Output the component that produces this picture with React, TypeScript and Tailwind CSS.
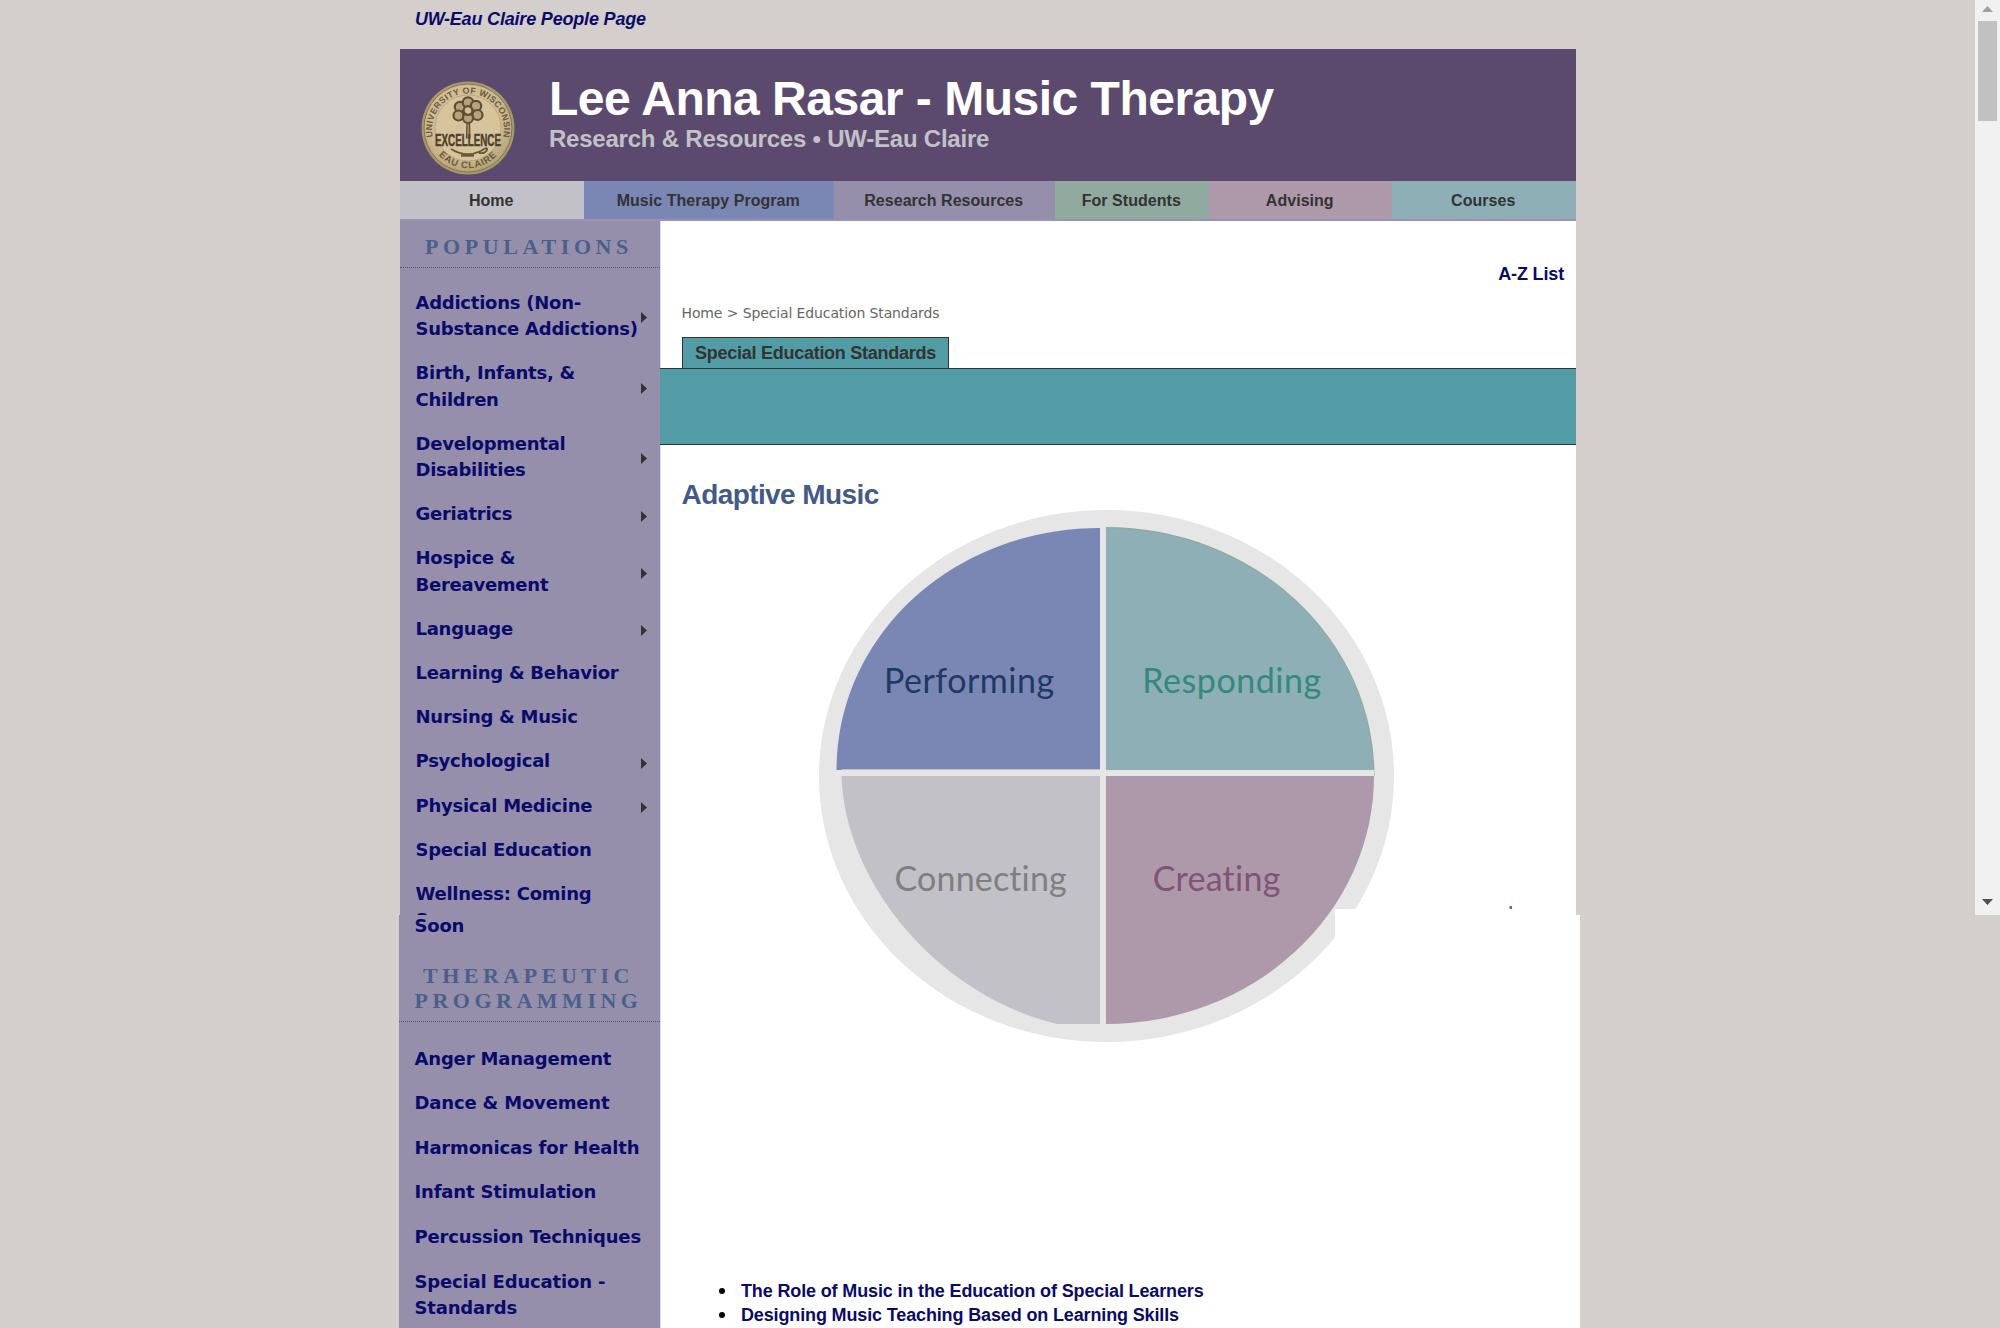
type Item = { lines: string[]; arrow?: boolean };

const populations: Item[] = [
  { lines: ["Addictions (Non-", "Substance Addictions)"], arrow: true },
  { lines: ["Birth, Infants, &", "Children"], arrow: true },
  { lines: ["Developmental", "Disabilities"], arrow: true },
  { lines: ["Geriatrics"], arrow: true },
  { lines: ["Hospice &", "Bereavement"], arrow: true },
  { lines: ["Language"], arrow: true },
  { lines: ["Learning & Behavior"] },
  { lines: ["Nursing & Music"] },
  { lines: ["Psychological"], arrow: true },
  { lines: ["Physical Medicine"], arrow: true },
  { lines: ["Special Education"] },
  { lines: ["Wellness: Coming", "Soon"] },
];

const programming: Item[] = [
  { lines: ["Anger Management"] },
  { lines: ["Dance & Movement"] },
  { lines: ["Harmonicas for Health"] },
  { lines: ["Infant Stimulation"] },
  { lines: ["Percussion Techniques"] },
  { lines: ["Special Education -", "Standards"] },
];

const tabs = [
  { label: "Home", cls: "w-[184px] bg-[#c2c1c8]" },
  { label: "Music Therapy Program", cls: "w-[250px] bg-[#7a87b4]" },
  { label: "Research Resources", cls: "w-[221px] bg-[#958fab]" },
  { label: "For Students", cls: "w-[154px] bg-[#90aa9f]" },
  { label: "Advising", cls: "w-[183px] bg-[#ae99aa]" },
  { label: "Courses", cls: "flex-1 bg-[#8eafb6]" },
];

function NavItem({ item }: { item: Item }) {
  return (
    <li className="flex items-center justify-between pl-[15.5px] pr-[13px]">
      <span>
        {item.lines.map((line) => (
          <span key={line} className="block">
            {line}
          </span>
        ))}
      </span>
      {item.arrow && (
        <svg className="mt-[3px] h-[11px] w-[6px] shrink-0" viewBox="0 0 6 11">
          <path d="M0 0 L6 5.5 L0 11 Z" fill="#333333" />
        </svg>
      )}
    </li>
  );
}

function Seal() {
  return (
    <svg className="h-[94px] w-[94px]" viewBox="-47 -47 94 94">
      <defs>
        <radialGradient id="gold" cx="45%" cy="40%" r="60%">
          <stop offset="0" stopColor="#dcc9a3" />
          <stop offset="0.7" stopColor="#cfba92" />
          <stop offset="1" stopColor="#b8a47a" />
        </radialGradient>
        <path id="topArc" d="M-35.2 9 A36 36 0 1 1 35.2 9" />
        <path id="bottomArc" d="M-30 26.6 A40 40 0 0 0 30 26.6" />
      </defs>
      <circle r="46.5" fill="#a69a6c" />
      <circle r="44" fill="url(#gold)" stroke="#857548" strokeWidth="1" />
      <circle r="33" fill="#d8c49c" stroke="#b5a178" strokeWidth="0.8" />
      <g fill="#6b5a3c" fontFamily="'Liberation Sans', sans-serif" fontWeight="bold" fontSize="8.8">
        <text textLength="128" lengthAdjust="spacing">
          <textPath href="#topArc">UNIVERSITY OF WISCONSIN</textPath>
        </text>
        <text fontSize="9.5" letterSpacing="0.8">
          <textPath href="#bottomArc" startOffset="50%" textAnchor="middle">
            EAU CLAIRE
          </textPath>
        </text>
      </g>
      <g fill="#b9a278" stroke="#5f4e36" strokeWidth="2.2">
        <path d="M-1.5 10 L-1 -6 L1.5 -6 L2 10 Z" fill="#a08a62" strokeWidth="1.2" />
        <circle cx="-8" cy="-21" r="5.2" />
        <circle cx="0" cy="-25.5" r="5.2" />
        <circle cx="8" cy="-22" r="5.2" />
        <circle cx="-9.5" cy="-12.5" r="5" />
        <circle cx="9.5" cy="-13" r="5" />
        <circle cx="0" cy="-10" r="5" />
        <circle cx="0" cy="-17.5" r="4.4" fill="#d3bf96" />
      </g>
      <text
        x="0"
        y="17.5"
        textAnchor="middle"
        textLength="66"
        lengthAdjust="spacingAndGlyphs"
        fill="#4e3f2b"
        stroke="#4e3f2b"
        strokeWidth="0.5"
        fontFamily="'Liberation Sans', sans-serif"
        fontWeight="bold"
        fontSize="16.5"
      >
        EXCELLENCE
      </text>
      <g fill="none" stroke="#6b5839" strokeWidth="1.8">
        <path d="M-17 21 Q-8 27 4 26 Q12 24 16 21 Q20 19 19 22 Q17 26 11 25" />
        <path d="M-7 27.5 H6" strokeWidth="2.4" />
      </g>
    </svg>
  );
}

function MusicWheel() {
  return (
    <svg className="block h-[532px] w-[576px]" viewBox="819 510 576 532">
      <ellipse cx="1106.5" cy="776" rx="287.5" ry="266" fill="#e6e6e6" />
      <path d="M836.5 770 C836.5 636.3 952 528 1100 528 V770 Z" fill="#7a87b4" />
      <path d="M1106 527 A268.5 249 0 0 1 1374.5 776 H1106 Z" fill="#90aa9f" />
      <path d="M1106 528.5 A267 247.5 0 0 1 1373.5 776 H1106 Z" fill="#8eafb6" />
      <rect x="1106" y="770" width="268" height="6" fill="#e6e6e6" />
      <path d="M841.5 776 H1100 V1024 H1057 C940 996 845 885 841.5 776 Z" fill="#c2c1c8" />
      <path d="M1106 776 H1374 A268 248 0 0 1 1106 1024 Z" fill="#ae99aa" />
      <path d="M841.5 769.5 H1100" stroke="#c2c1c8" strokeWidth="1" />
      <rect x="1335" y="909" width="60" height="60" fill="#ffffff" />
      <g fontFamily="Lato, sans-serif" fontSize="34">
        <text x="884" y="693" letterSpacing="0.5" fill="#1f3864">
          Performing
        </text>
        <text x="1142.3" y="693" letterSpacing="0.55" fill="#328a7c">
          Responding
        </text>
        <text x="894.6" y="891" letterSpacing="0.15" fill="#7f7f7f">
          Connecting
        </text>
        <text x="1152.7" y="891" letterSpacing="0.25" fill="#7f5475">
          Creating
        </text>
      </g>
    </svg>
  );
}

const headingCls =
  "border-b border-dotted border-[#47597f] text-center font-['Liberation_Serif',serif] text-[22px] font-bold text-[#4b5f8b]";
const listCls =
  "flex flex-col font-['DejaVu_Sans',sans-serif] text-[18px] leading-[26.45px] font-bold text-[#0a0a6b]";

export default function App() {
  return (
    <div className="relative h-[1328px] w-[2000px] overflow-hidden bg-[#d4cfcc] pl-[399px] font-['Liberation_Sans',sans-serif]">
      <div className="h-[49px] pl-4 text-[18px] leading-[38px] font-bold tracking-[-0.18px] text-[#0a0a6b] italic">
        <a>UW-Eau Claire People Page</a>
      </div>

      <header className="ml-px flex h-[132px] w-[1176px] bg-[#5b4a6d]">
        <div className="pt-8 pl-[20.5px]">
          <Seal />
        </div>
        <div className="pt-[26px] pl-[34.5px] font-bold">
          <h1 className="text-[48px] leading-[48px] tracking-[-0.5px] text-white">Lee Anna Rasar - Music Therapy</h1>
          <p className="mt-[4px] text-[24px] leading-[24px] tracking-[-0.22px] text-[#c2c1c8]">
            Research &amp; Resources • UW-Eau Claire
          </p>
        </div>
      </header>

      <nav className="ml-px flex h-[40px] w-[1176px] border-b-2 border-[#9a92b0] text-[16px] font-bold tracking-[0.04px] text-[#333333]">
        {tabs.map((t) => (
          <a key={t.label} className={`flex items-center justify-center pt-px pr-[1.5px] ${t.cls}`}>
            {t.label}
          </a>
        ))}
      </nav>

      <div className="flex h-[1107px]">
        <aside className="w-[261px]">
          <section className="ml-px h-[694px] overflow-hidden bg-[#958fab] pt-[13px]">
            <h2 className={`pr-[2px] pb-[6.5px] leading-[26px] tracking-[4.6px] ${headingCls}`}>POPULATIONS</h2>
            <ul className={`mt-[22px] gap-[17.7px] tracking-[-0.25px] ${listCls}`}>
              {populations.map((item) => (
                <NavItem key={item.lines[0]} item={item} />
              ))}
            </ul>
          </section>
          <section className="h-[413px] bg-[#958fab]">
            <div className={listCls}>
              <span className="-mt-[2.5px] block pl-[15.5px] tracking-[-0.2px]">Soon</span>
            </div>
            <h2 className={`mt-[24px] pr-[2px] pb-[7px] leading-[25.3px] tracking-[4.5px] ${headingCls}`}>
              THERAPEUTIC
              <br />
              PROGRAMMING
            </h2>
            <ul className={`mt-[24px] gap-[18.2px] tracking-[-0.17px] ${listCls}`}>
              {programming.map((item) => (
                <NavItem key={item.lines[0]} item={item} />
              ))}
            </ul>
          </section>
        </aside>

        <main className="relative h-[1107px] w-[920px] border-l border-[#dcdae6] bg-white">
          <div className="absolute top-0 right-0 h-[694px] w-[4px] bg-[#d4cfcc]" />
          <div className="pt-[42.5px] pr-4 text-right text-[18px] leading-5 font-bold tracking-[-0.15px] text-[#0a0a6b]">
            <a>A-Z List</a>
          </div>
          <p className="mt-[19.5px] pl-[20.5px] font-['DejaVu_Sans',sans-serif] text-[14px] leading-5 tracking-[-0.12px] text-[#666666]">
            Home &gt; Special Education Standards
          </p>
          <div className="mt-[14px] ml-[21px] h-[31px] w-[267px] border border-b-0 border-[#333333] bg-[#529ca5] text-center text-[18px] leading-[30px] font-bold tracking-[-0.27px] text-[#333333]">
            Special Education Standards
          </div>
          <div className="-ml-px h-[77px] w-[916px] border-y-[1.5px] border-[#333333] bg-[#529ca5]" />
          <h2 className="mt-[34px] pl-[20.5px] text-[28px] leading-8 font-bold tracking-[-0.58px] text-[#435a88]">
            Adaptive Music
          </h2>
          <div className="-mt-px pl-[158px]">
            <MusicWheel />
          </div>
          <ul className="mt-[237px] text-[18px] leading-6 font-bold tracking-[-0.14px] text-[#0a0a6b]">
            {[
              "The Role of Music in the Education of Special Learners",
              "Designing Music Teaching Based on Learning Skills",
            ].map((t) => (
              <li key={t} className="flex items-center pl-[58px]">
                <span className="mr-[16px] h-[6px] w-[6px] rounded-full bg-black" />
                <a>{t}</a>
              </li>
            ))}
          </ul>
          <div className="absolute top-[685px] left-[848px] flex h-[3px] w-[3px]">
            <span className="h-[3px] w-px bg-[#e0b478]" />
            <span className="h-[3px] w-[2px] bg-[#2b7fb8]" />
          </div>
        </main>
      </div>

      <div className="absolute top-0 right-0 flex h-[915px] w-[25px] flex-col items-center bg-[#f1f1f1]">
        <svg className="mt-[6px] h-[6px] w-[11px]" viewBox="0 0 11 6">
          <path d="M0 6 L5.5 0 L11 6 Z" fill="#a0a0a0" />
        </svg>
        <div className="mt-[9px] h-[100px] w-[19px] bg-[#c1c1c1]" />
        <svg className="mt-auto mb-[10px] h-[6px] w-[11px]" viewBox="0 0 11 6">
          <path d="M0 0 L5.5 6 L11 0 Z" fill="#505050" />
        </svg>
      </div>
    </div>
  );
}
